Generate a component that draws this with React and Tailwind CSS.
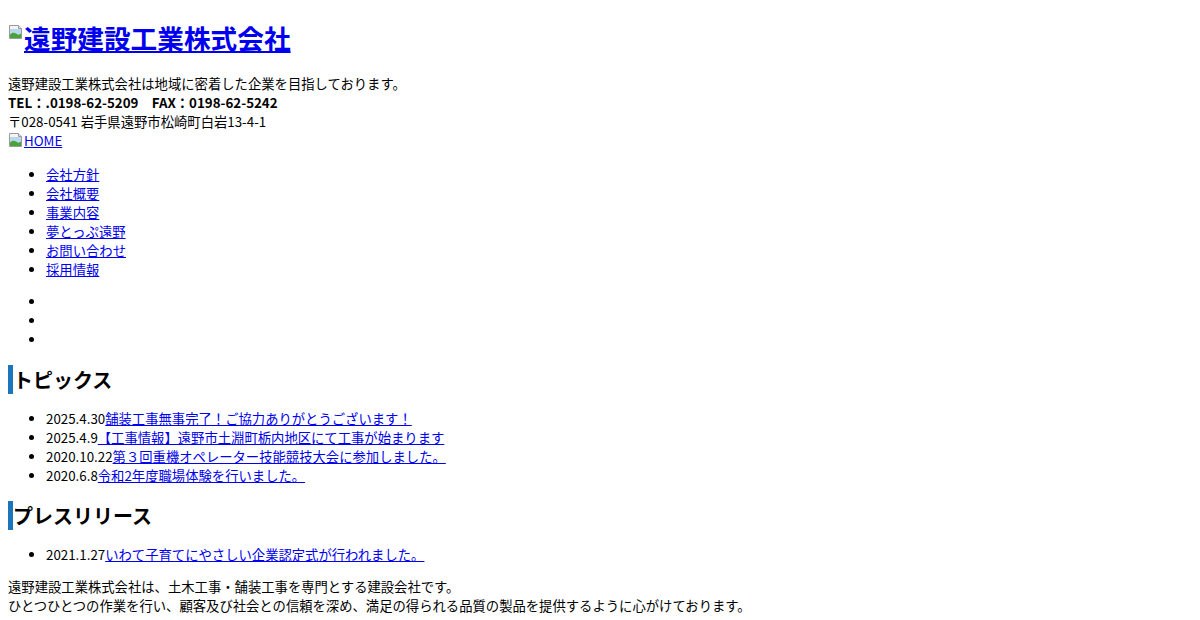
import React from 'react';

const BrokenImg = ({ className = '' }) => (
    <svg width="16" height="16" viewBox="0 0 16 16" className={`inline-block ${className}`}>
        <path d="M1.5 1.5h9l3 3v10h-12z" fill="#f4f4f4" stroke="#9a9a9a" />
        <path d="M10.5 1.5v3h3" fill="#e0e0e0" stroke="#9a9a9a" />
        <rect x="2" y="5" width="11" height="5" fill="#b9d7ee" />
        <path d="M2 14V10.5c2-2 4-2.5 6-1s3.5 1 5 0V14z" fill="#4aa23c" />
    </svg>
);

const topics = [
    ['2025.4.30', '舗装工事無事完了！ご協力ありがとうございます！'],
    ['2025.4.9', '【工事情報】遠野市土淵町栃内地区にて工事が始まります'],
    ['2020.10.22', '第３回重機オペレーター技能競技大会に参加しました。'],
    ['2020.6.8', '令和2年度職場体験を行いました。'],
];

const press = [['2021.1.27', 'いわて子育てにやさしい企業認定式が行われました。']];

const nav = ['会社方針', '会社概要', '事業内容', '夢とっぷ遠野', 'お問い合わせ', '採用情報'];

const Heading = ({ children }) => (
    <h2 className="mb-[15px] mt-[16px] border-l-[5px] border-[#1b75bb] text-[1.5em] font-bold leading-[normal] text-black">
        {children}
    </h2>
);

const NewsList = ({ items }) => (
    <ul className="my-[1em] list-disc pl-[38px]">
        {items.map(([date, title]) => (
            <li key={date}>
                {date}<a href="#" className="text-[#0000ee] underline">{title}</a>
            </li>
        ))}
    </ul>
);

export default function App() {
    return (
        <div className="min-h-screen bg-white px-2 pb-2 pt-px text-[13.33px] leading-[normal] text-black font-['Noto_Sans_CJK_JP','Noto_Sans',sans-serif]">
            <h1 className="mb-[0.64em] mt-[0.62em] text-[2em] font-bold leading-[normal]">
                <a href="#" className="text-[#0000ee] underline">
                    <BrokenImg className="align-[9px]" />遠野建設工業株式会社
                </a>
            </h1>

            <div>遠野建設工業株式会社は地域に密着した企業を目指しております。</div>
            <div className="font-bold">TEL：.0198-62-5209　FAX：0198-62-5242</div>
            <div>〒028-0541 岩手県遠野市松崎町白岩13-4-1</div>
            <div>
                <a href="#" className="text-[#0000ee] underline">
                    <BrokenImg className="align-[-2px]" />HOME
                </a>
            </div>

            <ul className="mb-[1em] mt-[15px] list-disc pl-[38px]">
                {nav.map((n) => (
                    <li key={n}>
                        <a href="#" className="text-[#0000ee] underline">{n}</a>
                    </li>
                ))}
            </ul>

            <ul className="my-[1em] list-disc pl-[38px]">
                <li className="h-[19px]"></li>
                <li className="h-[19px]"></li>
                <li className="h-[19px]"></li>
            </ul>

            <Heading>トピックス</Heading>
            <NewsList items={topics} />

            <Heading>プレスリリース</Heading>
            <NewsList items={press} />

            <p className="my-[1em]">
                遠野建設工業株式会社は、土木工事・舗装工事を専門とする建設会社です。
                <br />
                ひとつひとつの作業を行い、顧客及び社会との信頼を深め、満足の得られる品質の製品を提供するように心がけております。
            </p>
        </div>
    );
}
